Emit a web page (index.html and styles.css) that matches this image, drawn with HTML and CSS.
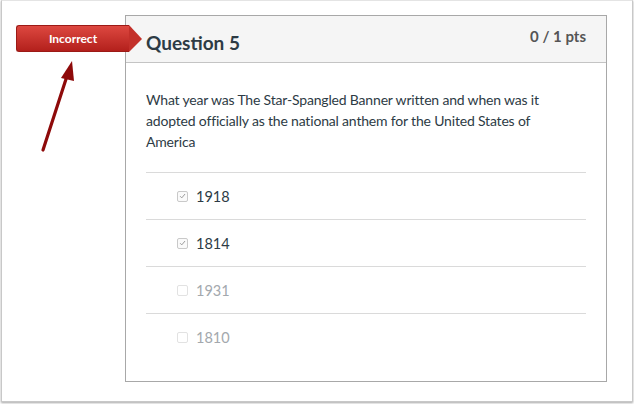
FILE: index.html
```html
<!DOCTYPE html>
<html>
<head>
<meta charset="utf-8">
<link rel="stylesheet" href="styles.css">
</head>
<body>
<div class="frame">
  <div class="gutter"></div>
  <div class="card">
    <div class="card-header">
      <div class="title">Question 5</div>
      <div class="pts">0 / 1 pts</div>
    </div>
    <div class="card-body">
      <p class="question">What year was The Star-Spangled Banner written and when was it adopted officially as the national anthem for the United States of America</p>
      <ul class="answers">
        <li class="answer"><span class="box checked"><svg viewBox="0 0 10 10" width="10" height="10"><path d="M2.3 5.2 L4.2 7.1 L7.8 2.8" fill="none" stroke="#9a9a9a" stroke-width="1.1"/></svg></span><span class="label">1918</span></li>
        <li class="answer"><span class="box checked"><svg viewBox="0 0 10 10" width="10" height="10"><path d="M2.3 5.2 L4.2 7.1 L7.8 2.8" fill="none" stroke="#9a9a9a" stroke-width="1.1"/></svg></span><span class="label">1814</span></li>
        <li class="answer muted"><span class="box"></span><span class="label">1931</span></li>
        <li class="answer muted"><span class="box"></span><span class="label">1810</span></li>
      </ul>
    </div>
  </div>
  <div class="badge">Incorrect</div>
  <svg class="pointer" width="90" height="160" viewBox="0 0 90 160">
    <line x1="42" y1="150" x2="66" y2="76" stroke="#8e0a0a" stroke-width="3.2" stroke-linecap="round"/>
    <polygon points="71,61 60,78 73,81" fill="#8e0a0a"/>
  </svg>
</div>
</body>
</html>
```
FILE: styles.css
```css
* { box-sizing: border-box; }
html, body { margin: 0; padding: 0; background: #fff; }
body {
  width: 634px;
  height: 404px;
  overflow: hidden;
  font-family: Lato, "Liberation Sans", sans-serif;
  color: #2d3b45;
}
.frame {
  position: relative;
  margin: 0 1px 0 1px;
  width: 632px;
  height: 402px;
  border: 1px solid #c8c8c8;
  border-top-color: #e4e4e4;
  box-shadow: 0 1px 2px rgba(0,0,0,0.35);
  display: flex;
  align-items: flex-start;
}
.gutter { width: 123px; flex: none; }
.card {
  margin-top: 14px;
  width: 482px;
  height: 367px;
  border: 1px solid #a8a8a8;
  background: #fff;
  display: flex;
  flex-direction: column;
}
.card-header {
  height: 47px;
  background: #f5f5f5;
  border-bottom: 1px solid #c4c4c4;
  display: flex;
  justify-content: space-between;
  align-items: flex-start;
  padding: 0 20px;
}
.title {
  font-size: 19px;
  font-weight: 700;
  line-height: 22px;
  margin-top: 16px;
  color: #2d3b45;
}
.pts {
  font-size: 15px;
  font-weight: 700;
  line-height: 20px;
  margin-top: 10px;
  color: #555;
}
.card-body { padding: 26px 20px 0 20px; }
.question {
  margin: 0;
  max-width: 405px;
  font-size: 14px;
  letter-spacing: -0.18px;
  line-height: 21px;
  color: #2d3b45;
}
.answers {
  list-style: none;
  margin: 20px 0 0 0;
  padding: 0;
}
.answer {
  height: 47px;
  border-top: 1px solid #dadada;
  display: flex;
  align-items: center;
  padding-left: 31px;
  font-size: 14.5px;
}
.box {
  width: 11px;
  height: 11px;
  border: 1px solid #c9c9c9;
  border-radius: 2px;
  background: #fafafa;
  display: flex;
  align-items: center;
  justify-content: center;
  margin-right: 8px;
  flex: none;
}
.box svg { display: block; }
.muted .box { border-color: #e2e2e2; background: #fff; }
.label { color: #2d3b45; line-height: 18px; padding-top: 1px; }
.muted .label { color: #a3a8ad; }
.badge {
  position: absolute;
  left: 14px;
  top: 24px;
  width: 113px;
  height: 27px;
  background: linear-gradient(#dd4840, #b3201c);
  border: 1px solid #9c1a16;
  border-right: none;
  border-radius: 3px 0 0 3px;
  color: #fff;
  font-size: 12px;
  font-weight: 700;
  line-height: 25px;
  text-align: center;
  padding-right: 0;
}
.badge::after {
  content: "";
  position: absolute;
  right: -13px;
  top: -1px;
  width: 0;
  height: 0;
  border-top: 14px solid transparent;
  border-bottom: 13px solid transparent;
  border-left: 13px solid #c3302a;
}
.pointer {
  position: absolute;
  left: -1px;
  top: -1px;
}
```
